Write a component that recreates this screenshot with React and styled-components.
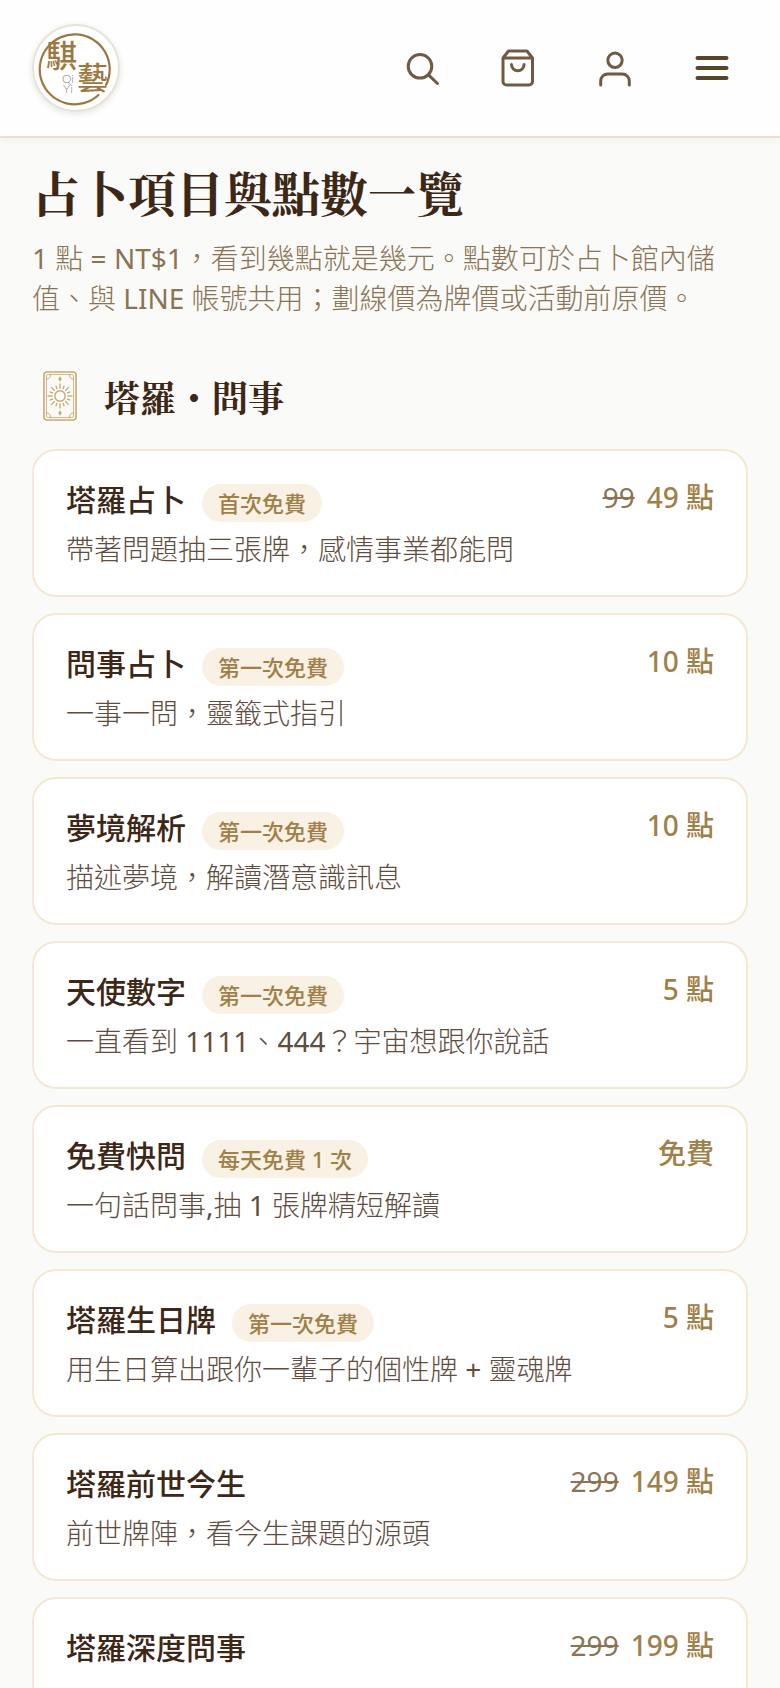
import React from "react";
import styled, { createGlobalStyle } from "styled-components";

const Global = createGlobalStyle`
  *, *::before, *::after { box-sizing: border-box; }
  body {
    margin: 0;
    background: #fafaf8;
    color: #3d2817;
    font-family: "Noto Sans", "Noto Sans CJK TC", sans-serif;
    font-size: 28px;
  }
`;

const Header = styled.header`
  position: sticky;
  top: 0;
  z-index: 1;
  display: flex;
  align-items: center;
  justify-content: space-between;
  padding: 24px 24px 24px 32px;
  background: #fefefe;
  border-bottom: 2px solid #ebdfcf;
  box-shadow: 0 2px 8px rgba(61, 40, 23, 0.05);
`;

const LogoLink = styled.a`
  display: block;
  width: 88px;
  height: 88px;
  border-radius: 50%;
  border: 2px solid #e9e3d6;
  background: #fff;
  box-shadow: 0 2px 6px rgba(61, 40, 23, 0.12);
  svg { display: block; width: 100%; height: 100%; }
`;

const Nav = styled.nav`
  display: flex;
  gap: 9px;
`;

const IconButton = styled.button`
  display: grid;
  place-items: center;
  width: 88px;
  height: 88px;
  padding: 0;
  border: 0;
  background: none;
  color: ${(p) => (p.$dark ? "#584429" : "#6f5a44")};
  cursor: pointer;
  svg {
    width: 40px;
    height: 40px;
    fill: none;
    stroke: currentColor;
    stroke-linecap: round;
    stroke-linejoin: round;
    stroke-width: ${(p) => (p.$dark ? "4px" : "3px")};
  }
`;

const Main = styled.main`
  padding: 18px 32px 32px;
`;

const Title = styled.h1`
  margin: 0;
  font-family: "Noto Serif CJK TC", "Noto Serif TC", "Noto Serif CJK JP", serif;
  font-size: 48px;
  font-weight: 700;
  line-height: 72px;
`;

const Intro = styled.p`
  margin: 10px 0 0;
  color: #8b7355;
  font-weight: 300;
  line-height: 40px;
`;

const Latin = styled.span`
  font-weight: 400;
`;

const SectionTitle = styled.h2`
  display: flex;
  align-items: center;
  gap: 20px;
  margin: 51px 0 24px;
  font-family: "Noto Serif CJK TC", "Noto Serif TC", "Noto Serif CJK JP", serif;
  font-size: 36px;
  font-weight: 700;
  line-height: 56px;
  svg { width: 52px; height: 52px; }
`;

const List = styled.ul`
  display: grid;
  gap: 16px;
  margin: 0;
  padding: 0;
  list-style: none;
`;

const Card = styled.li`
  display: flex;
  align-items: flex-start;
  justify-content: space-between;
  gap: 24px;
  min-height: 148px;
  padding: 25px 32px 23px;
  border: 2px solid #f3e8d3;
  border-radius: 24px;
  background: #fff;
`;

const NameRow = styled.div`
  display: flex;
  align-items: center;
  gap: 16px;
`;

const Name = styled.h3`
  margin: 0;
  font-size: 30px;
  font-weight: 500;
  line-height: 48px;
`;

const Badge = styled.span`
  margin-top: 6px;
  padding: 0 16px;
  border-radius: 20px;
  background: #f8f1e4;
  color: #a08048;
  font-size: 22px;
  font-weight: 500;
  line-height: 38px;
`;

const Detail = styled.p`
  margin: 2px 0 0;
  color: #5f4d3f;
  font-weight: 300;
  line-height: 46px;
`;

const Price = styled.div`
  display: flex;
  gap: 12px;
  flex-shrink: 0;
  color: #a08048;
  font-weight: 500;
  line-height: 42px;
  s { color: #8b7355; font-weight: 400; }
`;

const items = [
  { name: "塔羅占卜", badge: "首次免費", detail: "帶著問題抽三張牌，感情事業都能問", was: "99", price: "49 點" },
  { name: "問事占卜", badge: "第一次免費", detail: "一事一問，靈籤式指引", price: "10 點" },
  { name: "夢境解析", badge: "第一次免費", detail: "描述夢境，解讀潛意識訊息", price: "10 點" },
  { name: "天使數字", badge: "第一次免費", detail: "一直看到 1111、444？宇宙想跟你說話", price: "5 點" },
  { name: "免費快問", badge: "每天免費 1 次", detail: "一句話問事,抽 1 張牌精短解讀", price: "免費" },
  { name: "塔羅生日牌", badge: "第一次免費", detail: "用生日算出跟你一輩子的個性牌 + 靈魂牌", price: "5 點" },
  { name: "塔羅前世今生", detail: "前世牌陣，看今生課題的源頭", was: "299", price: "149 點" },
  { name: "塔羅深度問事", was: "299", price: "199 點" },
];

// Light Chinese text with its Latin letters and figures in regular weight.
function MixedText({ children }) {
  return children
    .split(/([A-Za-z0-9$=+,]+)/)
    .map((part, i) => (i % 2 ? <Latin key={i}>{part}</Latin> : part));
}

function Logo() {
  return (
    <svg viewBox="0 0 84 84" aria-hidden="true">
      <path d="M64.500 69A35 35 0 1 1 72 59" fill="none" stroke="#9c7841" strokeWidth="2.2" strokeLinecap="round" />
      <g fill="#9c7841" fontFamily="Noto Sans CJK TC, sans-serif" fontWeight="500">
        <text x="12" y="41" fontSize="31">騏</text>
        <text x="43" y="63" fontSize="31">藝</text>
        <g fontFamily="Lato, sans-serif" fontSize="12" fontWeight="300" fill="#8f8574">
          <text x="28" y="57">Qi</text>
          <text x="29" y="67">Yi</text>
        </g>
      </g>
    </svg>
  );
}

function TarotIcon() {
  const rays = Array.from({ length: 16 }, (_, i) => i * 22.5);
  return (
    <svg viewBox="0 0 52 52" fill="none" stroke="#c9a870" aria-hidden="true">
      <g transform="translate(2 -1)">
        <rect x="10" y="2" width="32" height="48" rx="3" strokeWidth="1.6" />
        <rect x="12.5" y="4.5" width="27" height="43" rx="1.5" strokeWidth=".8" />
        <circle cx="26" cy="26" r="5.2" strokeWidth="1.4" />
        {rays.map((a, i) => (
          <path key={a} d={i % 2 ? "M26 18.500V15" : "M26 18.500V13.500"} strokeWidth="1.3" transform={`rotate(${a} 26 26)`} />
        ))}
        <path d="M26 6.500l1.500 2.500-1.500 2.500-1.500-2.500zM26 40.500l1.500 2.500-1.500 2.500-1.500-2.500z" fill="#c9a870" strokeWidth=".4" />
        <path d="M12.500 9q4 0 4-4.500M39.500 9q-4 0-4-4.500M12.500 43q4 0 4 4.500M39.500 43q-4 0-4 4.500" strokeWidth="1" />
      </g>
    </svg>
  );
}

export default function App() {
  return (
    <>
      <Global />
      <Header>
        <LogoLink href="#" aria-label="騏藝"><Logo /></LogoLink>
        <Nav>
          <IconButton aria-label="搜尋">
            <svg viewBox="0 0 40 40"><circle cx="19" cy="18.3" r="11.8" /><path d="M28 27.300l8.500 8.200" /></svg>
          </IconButton>
          <IconButton aria-label="購物車">
            <svg viewBox="0 0 40 40"><path d="M10.500 3h18.500l5.500 7v23.500a3.500 3.500 0 0 1-3.500 3.500h-22.500a3.500 3.500 0 0 1-3.500-3.500V10zM5 10h29.500M13.500 16.500a6.300 6.300 0 0 0 12.600 0" /></svg>
          </IconButton>
          <IconButton aria-label="會員">
            <svg viewBox="0 0 40 40"><circle cx="20" cy="12.3" r="7.2" /><path d="M5.700 37v-4a7 7 0 0 1 7-7h14.600a7 7 0 0 1 7 7v4" /></svg>
          </IconButton>
          <IconButton $dark aria-label="選單">
            <svg viewBox="0 0 40 40"><path d="M5.500 10h29M5.500 20h29M5.500 30h29" /></svg>
          </IconButton>
        </Nav>
      </Header>
      <Main>
        <Title>占卜項目與點數一覽</Title>
        <Intro>
          <MixedText>1 點 = NT$1，看到幾點就是幾元。點數可於占卜館內儲值、與 LINE 帳號共用；劃線價為牌價或活動前原價。</MixedText>
        </Intro>
        <SectionTitle><TarotIcon />塔羅・問事</SectionTitle>
        <List>
          {items.map((item) => (
            <Card key={item.name}>
              <div>
                <NameRow>
                  <Name>{item.name}</Name>
                  {item.badge && <Badge>{item.badge}</Badge>}
                </NameRow>
                {item.detail && <Detail><MixedText>{item.detail}</MixedText></Detail>}
              </div>
              <Price>
                {item.was && <s>{item.was}</s>}
                <span>{item.price}</span>
              </Price>
            </Card>
          ))}
        </List>
      </Main>
    </>
  );
}
